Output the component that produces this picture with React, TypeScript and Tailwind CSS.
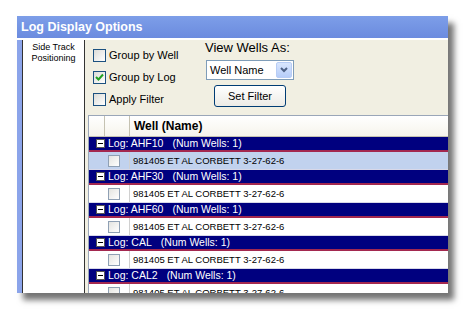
import React from "react";

const groups = ["AHF10", "AHF30", "AHF60", "CAL", "CAL2"];

function XpCheck({ checked, label }: { checked?: boolean; label: string }) {
  return (
    <div className="flex items-center h-[22px]">
      <div className="w-[13px] h-[13px] border border-[#1c5180] bg-gradient-to-br from-[#dcdcd7] to-white flex items-center justify-center">
        {checked && (
          <svg width="9" height="9" viewBox="0 0 9 9">
            <path d="M1 4 L3.5 6.5 L8 1.5" stroke="#21a121" strokeWidth="2" fill="none" />
          </svg>
        )}
      </div>
      <span className="ml-[3px] text-[11px] text-black">{label}</span>
    </div>
  );
}

function GroupRow({ name }: { name: string }) {
  return (
    <div className="h-[15px] bg-[#00007f] border-b-2 border-[#a3284f] flex items-center">
      <div className="ml-[7px] w-[9px] h-[9px] bg-white border border-[#555] flex items-center justify-center">
        <div className="w-[5px] h-[1px] bg-black" />
      </div>
      <span className="ml-[3px] text-[10.5px] leading-none text-white whitespace-nowrap">
        Log: {name}
        <span className="ml-[9px]">(Num Wells: 1)</span>
      </span>
    </div>
  );
}

function DataRow({ selected }: { selected?: boolean }) {
  return (
    <div className={`h-[18px] flex border-b border-[#d8d8e8] ${selected ? "bg-[#c1d2ee]" : "bg-white"}`}>
      <div className="w-[16px]" />
      <div className="w-[25px] border-r border-[#d0d0d0] flex items-center pl-[3px]">
        <div className="w-[12px] h-[12px] border border-[#8fa0b4] bg-gradient-to-br from-[#e4e4e0] to-white" />
      </div>
      <span className="ml-[3px] self-center text-[9.5px] leading-none text-black whitespace-nowrap">
        981405 ET AL CORBETT 3-27-62-6
      </span>
    </div>
  );
}

export default function App() {
  return (
    <div
      className="w-[465px] h-[310px] bg-white pl-[17px] pt-[16px] overflow-hidden"
      style={{ fontFamily: '"Liberation Sans", Arial, sans-serif' }}
    >
      <div className="w-[431px] h-[277px] flex flex-col shadow-[6px_7px_6px_rgba(0,0,0,0.55)]">
        <div className="h-[24px] bg-gradient-to-b from-[#7d9ee8] to-[#6b8bdf] flex items-center pl-[4px] border-b-2 border-white">
          <span className="text-white font-bold text-[12.5px] leading-none">Log Display Options</span>
        </div>
        <div className="flex flex-1 min-h-0">
          <div className="w-[5px] bg-[#8ba4ea]" />
          <div className="w-[63px] bg-white border-x border-[#333] pt-[2px] text-center text-[9px] leading-[11px] text-black">
            Side Track
            <br />
            Positioning
          </div>
          <div className="flex-1 min-w-0 bg-[#f1efe2] pl-[3px] flex flex-col">
            <div className="h-[75px] flex">
              <div className="w-[117px] pl-[5px] pt-[4px]">
                <XpCheck label="Group by Well" />
                <XpCheck checked label="Group by Log" />
                <XpCheck label="Apply Filter" />
              </div>
              <div className="pt-[1px] flex flex-col">
                <span className="text-[13px] leading-[14px] text-black">View Wells As:</span>
                <div className="mt-[5px] ml-[1px] w-[88px] h-[20px] bg-white border border-[#7f9db9] flex items-center">
                  <span className="pl-[3px] flex-1 text-[11px] text-black">Well Name</span>
                  <div className="w-[16px] h-[16px] mr-[1px] rounded-[2px] bg-gradient-to-b from-[#d9e6fd] to-[#b6cdf9] border border-[#b8cdf5] flex items-center justify-center">
                    <svg width="8" height="6" viewBox="0 0 8 6">
                      <path d="M1 1 L4 4 L7 1" stroke="#4d6185" strokeWidth="2" fill="none" />
                    </svg>
                  </div>
                </div>
                <div className="mt-[5px] ml-[9px] w-[72px] h-[22px] rounded-[3px] border border-[#003c74] bg-gradient-to-b from-white to-[#ecebe6] flex items-center justify-center text-[11px] text-black">
                  Set Filter
                </div>
              </div>
            </div>
            <div className="flex-1 min-h-0 bg-white border-t border-l border-[#9aa6b8] overflow-hidden">
              <div className="h-[21px] flex bg-gradient-to-b from-white to-[#f6f4ec] border-b border-[#c5c2b2]">
                <div className="w-[16px] border-r border-[#c5c2b2]" />
                <div className="w-[25px] border-r border-[#c5c2b2]" />
                <span className="ml-[4px] self-center font-bold text-[12px] text-black">Well (Name)</span>
              </div>
              {groups.map((g, i) => (
                <div key={g}>
                  <GroupRow name={g} />
                  <DataRow selected={i === 0} />
                </div>
              ))}
            </div>
          </div>
        </div>
      </div>
    </div>
  );
}
